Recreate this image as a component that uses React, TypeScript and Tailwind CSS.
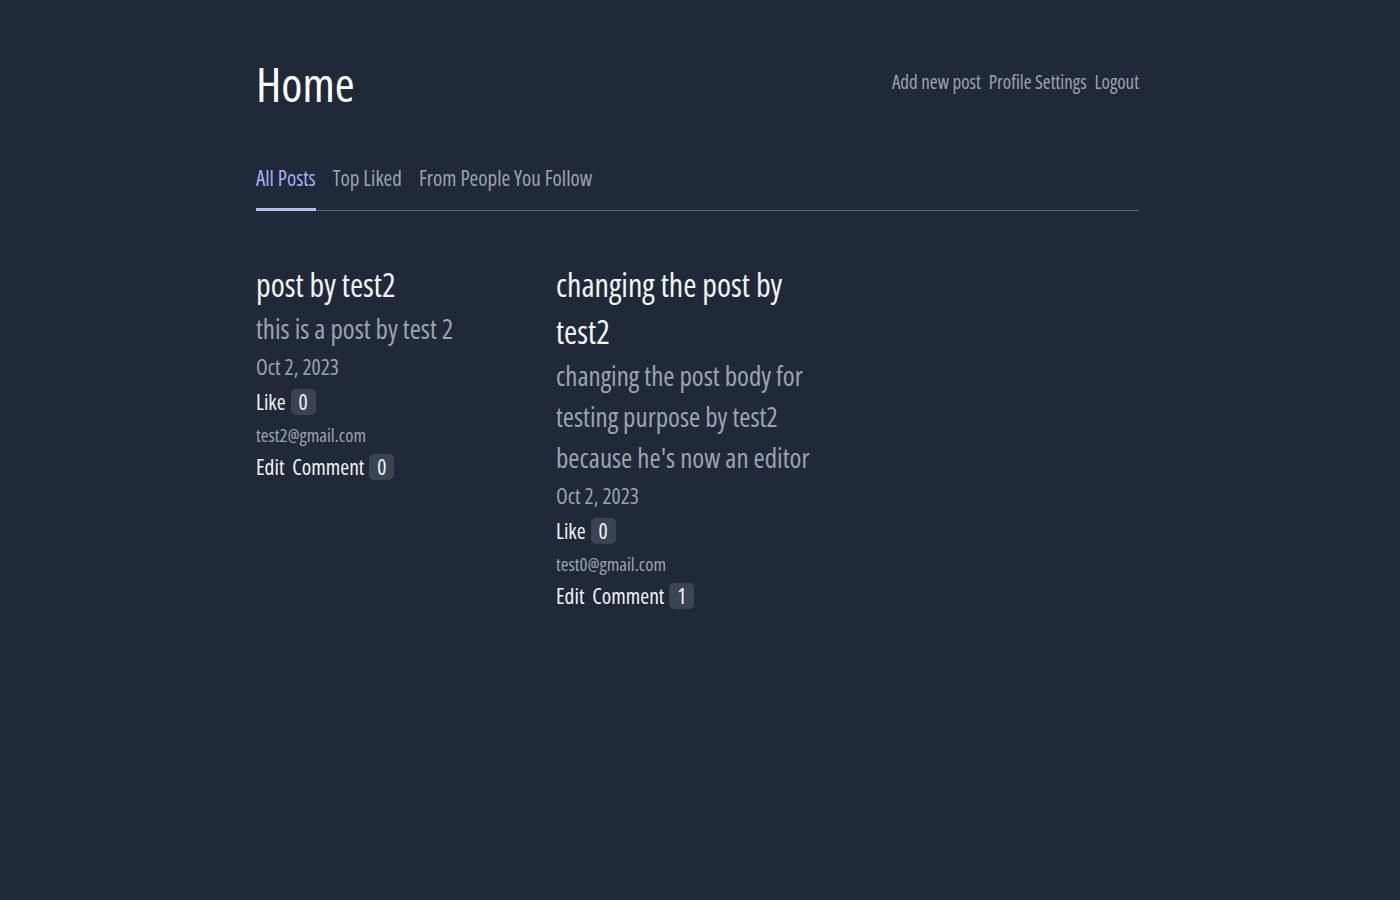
import React from "react";

type Post = { title: string; body: string; date: string; email: string; likes: number; comments: number };

const posts: Post[] = [
  { title: "post by test2", body: "this is a post by test 2", date: "Oct 2, 2023", email: "test2@gmail.com", likes: 0, comments: 0 },
  {
    title: "changing the post by test2",
    body: "changing the post body for testing purpose by test2 because he's now an editor",
    date: "Oct 2, 2023",
    email: "test0@gmail.com",
    likes: 0,
    comments: 1,
  },
];

function Badge({ n }: { n: number }) {
  return (
    <span className="ml-[5px] inline-flex h-[26px] w-[25px] items-center justify-center rounded-[5px] bg-[#3b4452]">
      {n}
    </span>
  );
}

function PostCard({ p }: { p: Post }) {
  return (
    <div className="flex flex-col">
      <h2 className="text-[32px] leading-[47px] text-[#f3f4f6]">{p.title}</h2>
      <p className="text-[27px] leading-[41px] text-[#9ca3af]">{p.body}</p>
      <div className="text-[21.5px] leading-[35px] text-[#9ca3af]">{p.date}</div>
      <div className="flex items-center text-[21.5px] leading-[36px] text-[#f3f4f6]">
        <span>Like</span>
        <Badge n={p.likes} />
      </div>
      <div className="text-[18.7px] leading-[29px] text-[#9ca3af]">{p.email}</div>
      <div className="flex items-center text-[21.5px] leading-[36px] text-[#f3f4f6]">
        <span>Edit</span>
        <span className="ml-[8px]">Comment</span>
        <Badge n={p.comments} />
      </div>
    </div>
  );
}

export default function App() {
  return (
    <div className="min-h-screen bg-[#1f2937] font-['Open_Sans',sans-serif] font-stretch-condensed">
      <div className="ml-[256px] w-[883px] pt-[52px]">
        <header className="flex items-start justify-between">
          <h1 className="text-[48px] leading-[64px] text-white">Home</h1>
          <nav className="mt-[16px] flex gap-[8px] text-[19px] text-[#9ca3af]">
            <a>Add new post</a>
            <a>Profile Settings</a>
            <a>Logout</a>
          </nav>
        </header>
        <div className="mt-[46px] flex gap-[17px] border-b border-[#5b6472] text-[21px] leading-[32px]">
          <div className="-mb-px border-b-[3px] border-[#b4bbf5] pb-[14px] text-[#a5b0f5]">All Posts</div>
          <div className="pb-[14px] text-[#9ca3af]">Top Liked</div>
          <div className="pb-[14px] text-[#9ca3af]">From People You Follow</div>
        </div>
        <div className="mt-[50px] grid grid-cols-3 gap-x-[17px]">
          {posts.map((p, i) => (
            <PostCard key={i} p={p} />
          ))}
        </div>
      </div>
    </div>
  );
}
